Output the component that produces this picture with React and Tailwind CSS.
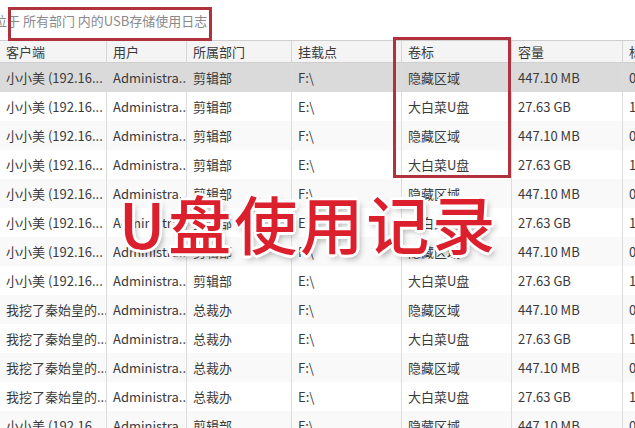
import React from 'react';

const cols = ['客户端', '用户', '所属部门', '挂载点', '卷标', '容量', '标'];
const widths = ['w-[107px]', 'w-[80px]', 'w-[105px]', 'w-[110px]', 'w-[110px]', 'w-[111px]', 'w-[60px]'];

const drives = [
  { mount: 'F:\\', label: '隐藏区域', size: '447.10 MB', extra: '0' },
  { mount: 'E:\\', label: '大白菜U盘', size: '27.63 GB', extra: '1' },
];

const clients = ['小小美 (192.16...', '小小美 (192.16...', '小小美 (192.16...', '小小美 (192.16...', '小小美 (192.16...', '小小美 (192.16...', '小小美 (192.16...', '小小美 (192.16...', '我挖了秦始皇的...', '我挖了秦始皇的...', '我挖了秦始皇的...', '我挖了秦始皇的...', '小小美 (192.16...'];

const rows = clients.map((client, i) => {
  const d = drives[i % 2];
  return [client, 'Administra...', client.startsWith('我') ? '总裁办' : '剪辑部', d.mount, d.label, d.size, d.extra];
});

export default function App() {
  return (
    <div
      className="relative w-[635px] h-[428px] overflow-hidden bg-white text-[13px] text-[#3a3a3a]"
      style={{ fontFamily: '"Noto Sans CJK SC", "Liberation Sans", sans-serif' }}
    >
      {/* title line */}
      <div className="h-[40px] flex items-center -ml-[6px] text-[#8a8a8a] whitespace-nowrap pt-[1px]">
        位于 所有部门 内的USB存储使用日志
      </div>

      {/* table */}
      <div className="flex flex-col">
        <div className="flex h-[23px] bg-[#f4f4f4] border-t border-b border-[#cfcfcf]">
          {cols.map((c, i) => (
            <div key={c} className={`${widths[i]} shrink-0 flex items-center px-[6px] border-r border-[#d6d6d6] whitespace-nowrap`}>
              {c}
            </div>
          ))}
        </div>
        {rows.map((r, ri) => (
          <div
            key={ri}
            className={`flex h-[29px] ${ri === 0 ? 'bg-[#dadada]' : ri % 2 === 1 ? 'bg-white' : 'bg-[#f9f9f9]'}`}
          >
            {r.map((cell, ci) => (
              <div key={ci} className={`${widths[ci]} shrink-0 flex items-center px-[6px] border-r border-[#dcdcdc] whitespace-nowrap overflow-hidden`}>
                {cell}
              </div>
            ))}
          </div>
        ))}
      </div>

      {/* red highlight boxes */}
      <div className="absolute left-[8px] top-[7px] w-[204px] h-[34px] border-[3px] border-[#b3303d]" />
      <div className="absolute left-[393px] top-[37px] w-[118px] h-[141px] border-[3px] border-[#b3303d]" />

      {/* overlay caption */}
      <div
        className="absolute left-[119px] top-[182px] text-[63px] leading-[80px] font-medium text-[#dc1f2c] tracking-[3px] whitespace-nowrap [text-shadow:0_0_2px_#fff,3px_0_0_#fff,-3px_0_0_#fff,0_3px_0_#fff,0_-3px_0_#fff,2px_2px_0_#fff,-2px_-2px_0_#fff,2px_-2px_0_#fff,-2px_2px_0_#fff,3px_4px_6px_rgba(0,0,0,0.35)]"
        style={{ fontFamily: '"Noto Sans CJK SC", sans-serif' }}
      >
        U盘使用记录
      </div>
    </div>
  );
}
